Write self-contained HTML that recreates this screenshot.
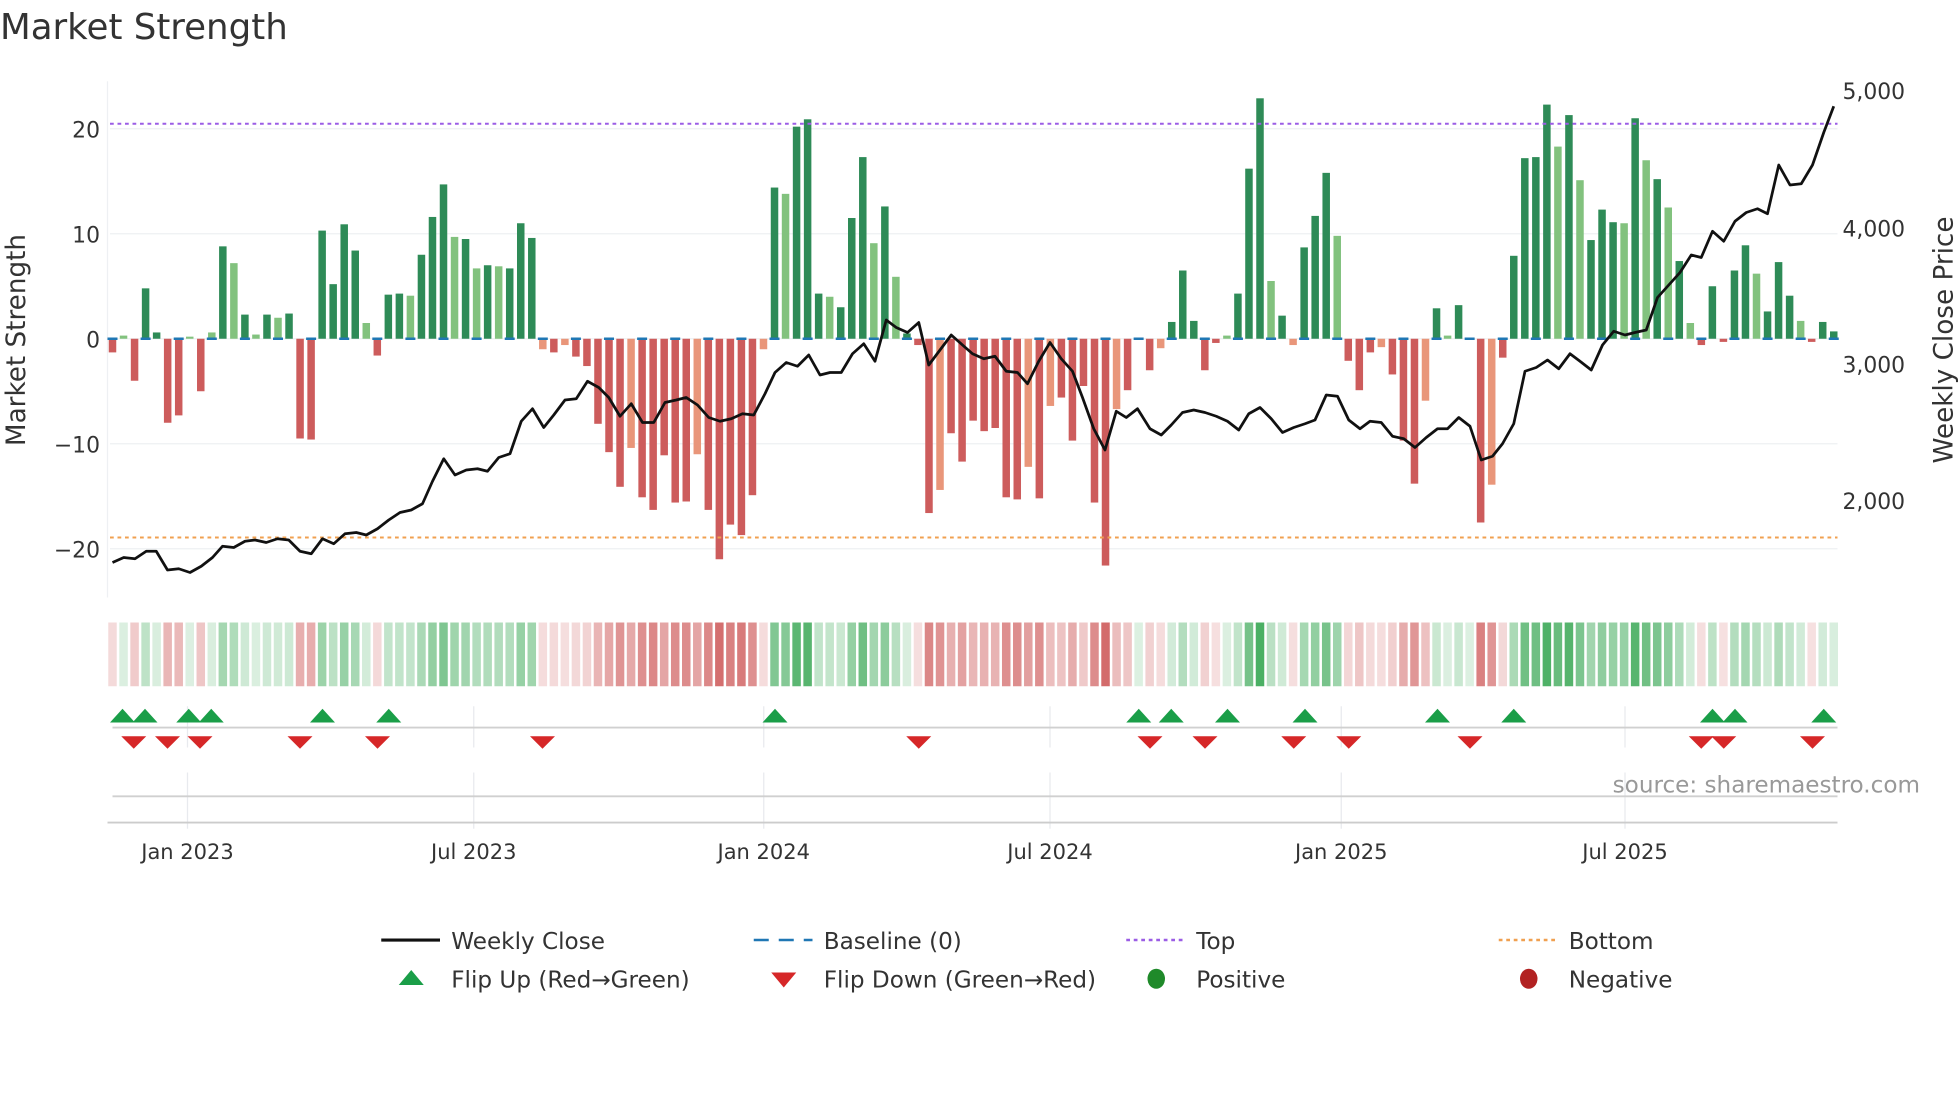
<!DOCTYPE html>
<html><head><meta charset="utf-8"><style>
html,body{margin:0;padding:0;background:#fff;width:1960px;height:1102px;overflow:hidden}
svg{display:block;font-family:"DejaVu Sans","Liberation Sans",sans-serif}
</style></head><body>
<svg id="s" width="1960" height="1102" viewBox="0 0 1568 881.6" xmlns="http://www.w3.org/2000/svg">
<rect width="1568" height="882" fill="#fff"/>
<text x="0" y="31" font-size="28.5" fill="#333">Market Strength</text>
<g id="grid"></g>
<g id="bars"></g>
<g id="strip"></g>
<g id="marks"></g>
<line x1="88" y1="99" x2="1470" y2="99" stroke="#9b5de5" stroke-width="1.6" stroke-dasharray="3,3"/>
<line x1="88" y1="430" x2="1470" y2="430" stroke="#f0a050" stroke-width="1.6" stroke-dasharray="3,3"/>
<polyline id="price" fill="none" stroke="#111" stroke-width="2.2" stroke-linejoin="round"/>
<g font-size="17.5" fill="#333" text-anchor="end">
<text x="80" y="110">20</text><text x="80" y="194">10</text><text x="80" y="278">0</text>
<text x="80" y="362">−10</text><text x="80" y="446">−20</text>
</g>
<g font-size="17.5" fill="#333">
<text x="1474" y="79">5,000</text><text x="1474" y="189">4,000</text><text x="1474" y="298">3,000</text><text x="1474" y="407">2,000</text>
</g>
<text transform="translate(20,272) rotate(-90)" font-size="21" fill="#333" text-anchor="middle">Market Strength</text>
<text transform="translate(1562,272) rotate(-90)" font-size="21" fill="#333" text-anchor="middle">Weekly Close Price</text>
<text x="1536" y="634" font-size="18.5" fill="#999" text-anchor="end">source: sharemaestro.com</text>
<g font-size="16.8" fill="#333" text-anchor="middle">
<text x="150" y="687">Jan 2023</text><text x="379" y="687">Jul 2023</text><text x="611" y="687">Jan 2024</text>
<text x="840" y="687">Jul 2024</text><text x="1073" y="687">Jan 2025</text><text x="1300" y="687">Jul 2025</text>
</g>
<g font-size="18.5" fill="#333">
<line x1="305" y1="752" x2="352" y2="752" stroke="#111" stroke-width="2.5"/><text x="361" y="759">Weekly Close</text>
<line x1="603" y1="752" x2="650" y2="752" stroke="#1f77b4" stroke-width="2" stroke-dasharray="12,8"/><text x="659" y="759">Baseline (0)</text>
<line x1="901" y1="752" x2="948" y2="752" stroke="#9b5de5" stroke-width="2" stroke-dasharray="3,3"/><text x="957" y="759">Top</text>
<line x1="1199" y1="752" x2="1246" y2="752" stroke="#f0a050" stroke-width="2" stroke-dasharray="3,3"/><text x="1255" y="759">Bottom</text>
<polygon points="319,788 329,776 339,788" fill="#1a9e48"/><text x="361" y="790">Flip Up (Red→Green)</text>
<polygon points="617,778 637,778 627,790" fill="#d62728"/><text x="659" y="790">Flip Down (Green→Red)</text>
<ellipse cx="925" cy="783" rx="7" ry="8" fill="#1f8a2a"/><text x="957" y="790">Positive</text>
<ellipse cx="1223" cy="783" rx="7" ry="8" fill="#b22222"/><text x="1255" y="790">Negative</text>
</g>
</svg>
<script>
var NS="http://www.w3.org/2000/svg";
function el(p,t,a){var e=document.createElementNS(NS,t);for(var k in a)e.setAttribute(k,a[k]);document.getElementById(p).appendChild(e);return e;}
var v=[-1.3,.3,-4,4.8,.6,-8,-7.3,.2,-5,.6,8.8,7.2,2.3,.4,2.3,2,2.4,-9.5,-9.6,10.3,5.2,10.9,8.4,1.5,-1.6,4.2,4.3,4.1,8,11.6,14.7,9.7,9.5,6.7,7,6.9,6.7,11,9.6,-1,-1.3,-.6,-1.7,-2.6,-8.1,-10.8,-14.1,-10.4,-15.1,-16.3,-11.1,-15.6,-15.5,-11,-16.3,-21,-17.7,-18.7,-14.9,-1,14.4,13.8,20.2,20.9,4.3,4,3,11.5,17.3,9.1,12.6,5.9,.5,-.6,-16.6,-14.4,-9,-11.7,-7.8,-8.8,-8.5,-15.1,-15.3,-12.2,-15.2,-6.4,-5.6,-9.7,-4.5,-15.6,-21.6,-6.7,-4.9,0,-3,-.9,1.6,6.5,1.7,-3,-.4,.3,4.3,16.2,22.9,5.5,2.2,-.6,8.7,11.7,15.8,9.8,-2.1,-4.9,-1.3,-.8,-3.4,-9.7,-13.8,-5.9,2.9,.3,3.2,0,-17.5,-13.9,-1.8,7.9,17.2,17.3,22.3,18.3,21.3,15.1,9.4,12.3,11.1,11,21,17,15.2,12.5,7.4,1.5,-.6,5,-.3,6.5,8.9,6.2,2.6,7.3,4.1,1.7,-.3,1.6,.7];
var n=v.length,dx=(1467-90)/(n-1);
[103,187,271,355,439].forEach(function(y){el("grid","line",{x1:88,x2:1470,y1:y,y2:y,stroke:"#eef0f3","stroke-width":1});});
el("grid","line",{x1:86,x2:86,y1:65,y2:478,stroke:"#eef0f3"});
[150,379,611,840,1073,1300].forEach(function(x){el("grid","line",{x1:x,x2:x,y1:565,y2:598,stroke:"#e8eaee"});el("grid","line",{x1:x,x2:x,y1:618,y2:663,stroke:"#e8eaee"});});
el("grid","line",{x1:90,x2:1470,y1:582,y2:582,stroke:"#d0d0d0","stroke-width":1.5});
el("grid","line",{x1:90,x2:1470,y1:637,y2:637,stroke:"#d0d0d0","stroke-width":1.5});
el("grid","line",{x1:86,x2:1470,y1:658,y2:658,stroke:"#cccccc","stroke-width":1.5});
var prev=0;
for(var i=0;i<n;i++){
 var x=90+i*dx,val=v[i],dark=Math.abs(val)>=Math.abs(prev)||i%2==0;
 var col=val>=0?(dark?"#2e8b57":"#82c27e"):(dark?"#cd5c5c":"#e9967a");
 var h=val*8.4;
 if(Math.abs(val)>0.05) el("bars","rect",{x:x-3,y:h>0?271-h:271,width:6,height:Math.abs(h),fill:col});
 if(i%3==0) el("bars","line",{x1:x-4,x2:x+4,y1:271,y2:271,stroke:"#1f77b4","stroke-width":2});
 var a=Math.min(0.85,0.16+Math.abs(val)/22*0.65);
 var sc=val>=0?"rgba(40,160,70,"+a+")":"rgba(200,70,70,"+a+")";
 el("strip","rect",{x:x-3.4,y:498,width:6.8,height:51,fill:sc});
 prev=val;
}
var p="90,450 99,446 108,447 117,441 125,441 134,456 143,455 152,458 161,453 170,446 178,437 187,438 196,433 204,432 213,434 222,431 231,432 240,441 249,443 258,431 267,435 276,427 285,426 293,428 302,423 311,416 320,410 329,408 338,403 346,385 355,367 364,380 373,376 382,375 390,377 399,366 408,363 417,337 426,327 435,342 443,332 452,320 461,319 470,305 479,310 487,318 496,333 505,323 514,338 523,338 532,322 541,320 549,318 558,324 567,334 576,337 585,335 594,331 603,332 612,315 620,298 629,290 638,293 647,284 656,300 664,298 673,298 682,283 691,275 700,289 709,256 717,262 726,266 735,258 743,292 752,280 761,268 770,276 778,283 787,287 796,285 805,297 814,298 822,307 831,289 840,274 849,287 858,297 866,318 875,343 884,360 893,329 901,334 910,327 920,343 929,348 937,340 946,330 955,328 964,330 973,333 982,337 991,344 999,331 1008,326 1017,335 1026,346 1035,342 1044,339 1052,336 1061,316 1070,317 1079,336 1088,343 1096,337 1105,338 1114,349 1123,351 1132,358 1141,350 1150,343 1158,343 1167,334 1176,341 1185,368 1194,365 1202,355 1211,339 1220,297 1229,294 1238,288 1247,295 1256,283 1264,289 1273,296 1282,276 1291,265 1300,268 1308,266 1317,264 1326,238 1335,228 1344,218 1353,204 1361,206 1370,185 1379,193 1388,177 1397,170 1406,167 1414,171 1423,132 1432,148 1441,147 1450,132 1459,106 1467,85";
document.getElementById("price").setAttribute("points",p);
[98,116,151,169,258,311,620,911,937,982,1044,1150,1211,1370,1388,1459].forEach(function(x){el("marks","polygon",{points:(x-10)+",578 "+x+",567 "+(x+10)+",578",fill:"#1a9e48"});});
[107,134,160,240,302,434,735,920,964,1035,1079,1176,1361,1379,1450].forEach(function(x){el("marks","polygon",{points:(x-10)+",589 "+(x+10)+",589 "+x+",599",fill:"#d62728"});});
</script>
</body></html>
